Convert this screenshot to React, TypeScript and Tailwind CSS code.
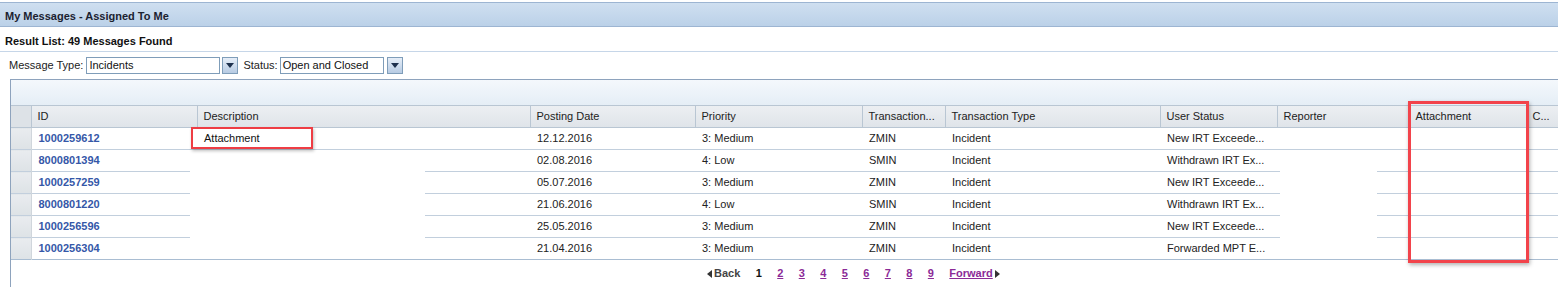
import React from "react";

type Row = {
  id: string;
  date: string;
  priority: string;
  code: string;
  type: string;
  status: string;
};

const ROWS: Row[] = [
  { id: "1000259612", date: "12.12.2016", priority: "3: Medium", code: "ZMIN", type: "Incident", status: "New IRT Exceede..." },
  { id: "8000801394", date: "02.08.2016", priority: "4: Low", code: "SMIN", type: "Incident", status: "Withdrawn IRT Ex..." },
  { id: "1000257259", date: "05.07.2016", priority: "3: Medium", code: "ZMIN", type: "Incident", status: "New IRT Exceede..." },
  { id: "8000801220", date: "21.06.2016", priority: "4: Low", code: "SMIN", type: "Incident", status: "Withdrawn IRT Ex..." },
  { id: "1000256596", date: "25.05.2016", priority: "3: Medium", code: "ZMIN", type: "Incident", status: "New IRT Exceede..." },
  { id: "1000256304", date: "21.04.2016", priority: "3: Medium", code: "ZMIN", type: "Incident", status: "Forwarded MPT E..." },
];

const HEADERS = [
  "ID",
  "Description",
  "Posting Date",
  "Priority",
  "Transaction...",
  "Transaction Type",
  "User Status",
  "Reporter",
  "Attachment",
  "C...",
];

function DropButton() {
  return (
    <span className="flex h-[17px] w-[16px] items-center justify-center border border-[#7f9db9] bg-gradient-to-b from-[#e6eef8] to-[#b7cbe3]">
      <svg width="8" height="5" viewBox="0 0 8 5">
        <path d="M0 0h8L4 5z" fill="#1d304d" />
      </svg>
    </span>
  );
}

function Select({ value, width, gap }: { value: string; width: string; gap: string }) {
  return (
    <div className={`flex items-center ${gap}`}>
      <div
        className={`h-[17px] ${width} border border-[#7f9db9] bg-white pl-[2px] text-[11px] leading-[15px] text-[#111]`}
      >
        {value}
      </div>
      <DropButton />
    </div>
  );
}

function Pager() {
  const pages = ["2", "3", "4", "5", "6", "7", "8", "9"];
  return (
    <div className="flex h-[27px] items-center gap-[15.4px] pl-[696px] text-[11px] font-bold">
      <span className="flex items-center gap-[2px] text-[#444]">
        <svg width="5" height="8" viewBox="0 0 5 8">
          <path d="M5 0v8L0 4z" fill="#333" />
        </svg>
        Back
      </span>
      <span className="text-[#111]">1</span>
      {pages.map((p) => (
        <span key={p} className="text-[#8b2a97] underline">
          {p}
        </span>
      ))}
      <span className="flex items-center gap-[2px]">
        <span className="text-[#8b2a97] underline">Forward</span>
        <svg width="5" height="8" viewBox="0 0 5 8">
          <path d="M0 0v8L5 4z" fill="#333" />
        </svg>
      </span>
    </div>
  );
}

export default function App() {
  return (
    <div
      className="relative h-[287px] w-[1558px] overflow-hidden bg-white pt-[2px] text-[#222]"
      style={{ fontFamily: '"Liberation Sans", Arial, sans-serif' }}
    >
      {/* title bar */}
      <div className="flex h-[25px] items-center border-y border-[#9db5d2] bg-gradient-to-b from-[#cfdff0] to-[#bbd1e8] pl-[5px] pt-[3px] text-[11px] font-bold text-[#1b2230]">
        My Messages - Assigned To Me
      </div>

      <div className="flex h-[24px] items-center pl-[5px] pt-[4px] text-[11px] font-bold text-[#111]">
        Result List: 49 Messages Found
      </div>

      {/* filters */}
      <div className="flex h-[28px] items-center border-t border-[#c6d6e8] pl-[9px] text-[11px] text-[#222]">
        <span className="mr-[3px]">Message Type:</span>
        <Select value="Incidents" width="w-[134px]" gap="gap-[2px]" />
        <span className="ml-[5px] mr-[2px]">Status:</span>
        <Select value="Open and Closed" width="w-[104px]" gap="gap-[3px]" />
      </div>

      {/* result panel */}
      <div className="ml-[10px] border-l border-t border-[#8ea3bd]">
        <div className="h-[25px] bg-gradient-to-b from-[#f4f8fc] to-[#e5eef6]" />
        <table className="table-fixed border-collapse text-[11px]" style={{ width: 1555 }}>
          <colgroup>
            <col className="w-[20px]" />
            <col className="w-[166px]" />
            <col className="w-[333px]" />
            <col className="w-[165px]" />
            <col className="w-[167px]" />
            <col className="w-[83px]" />
            <col className="w-[215px]" />
            <col className="w-[117px]" />
            <col className="w-[132px]" />
            <col className="w-[117px]" />
            <col className="w-[40px]" />
          </colgroup>
          <thead>
            <tr className="h-[22px] bg-gradient-to-b from-[#eceff2] to-[#dfe4e9]">
              <th className="border-y border-[#b9c6d3] bg-[#dde2e7] p-0" />
              {HEADERS.map((h) => (
                <th
                  key={h}
                  className="overflow-hidden whitespace-nowrap border-y border-l border-[#b9c6d3] pl-[6px] text-left font-normal text-[#222]"
                >
                  {h}
                </th>
              ))}
            </tr>
          </thead>
          <tbody>
            {ROWS.map((r, i) => (
              <tr
                key={r.id}
                className={`h-[22px] border-b ${i === ROWS.length - 1 ? "border-[#a9bdd2]" : "border-[#c2cfdd]"}`}
              >
                <td className="border-r border-[#d0d6dc] bg-gradient-to-b from-[#e9ecef] to-[#dde2e6] p-0" />
                <td className="pl-[7px] font-bold text-[#3557a8]">{r.id}</td>
                <td className="pl-[7px]" />
                <td className="pl-[7px]">{r.date}</td>
                <td className="pl-[7px]">{r.priority}</td>
                <td className="pl-[7px]">{r.code}</td>
                <td className="pl-[7px]">{r.type}</td>
                <td className="whitespace-nowrap pl-[7px]">{r.status}</td>
                <td />
                <td />
                <td />
              </tr>
            ))}
          </tbody>
        </table>
        <Pager />
      </div>

      {/* redacted areas */}
      <div className="absolute left-[190px] top-[150px] h-[109px] w-[235px] bg-white" />
      <div className="absolute left-[1280px] top-[150px] h-[109px] w-[97px] bg-white" />

      {/* highlight boxes */}
      <div className="absolute left-[191px] top-[127px] flex h-[22px] w-[122px] items-center border-2 border-[#ee3d44] pl-[11px] text-[11px] text-[#111] shadow-[1px_2px_3px_rgba(0,0,0,0.25)]">
        Attachment
      </div>
      <div className="absolute left-[1408px] top-[101px] h-[162px] w-[121px] border-[3px] border-[#f2434b] shadow-[1px_2px_4px_rgba(0,0,0,0.3)]" />
    </div>
  );
}
